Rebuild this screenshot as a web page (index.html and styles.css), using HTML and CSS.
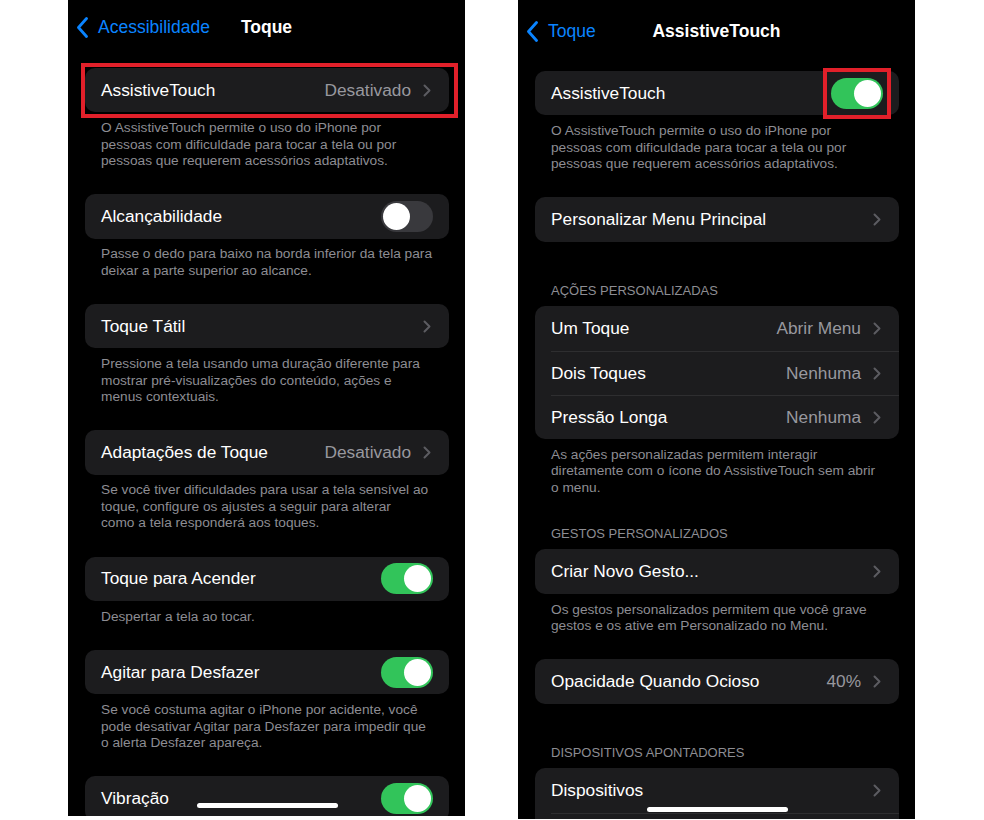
FILE: index.html
```html
<!DOCTYPE html>
<html lang="pt-BR">
<head>
  <meta charset="UTF-8" />
  <meta name="viewport" content="width=device-width, initial-scale=1.0" />
  <title>Toque - AssistiveTouch</title>
  <link rel="stylesheet" href="styles.css">
</head>
<body>
  <div class="screens">

    <!-- Ajustes > Acessibilidade > Toque -->
    <section class="phone phone-left">
      <header class="nav">
        <a class="back">
          <svg class="back-icon" viewBox="0 0 11 21"><path d="M9.5 1.5 L1.5 10.5 L9.5 19.5" /></svg>
          <span>Acessibilidade</span>
        </a>
        <h1 class="title">Toque</h1>
        <span></span>
      </header>

      <div class="list">
        <div class="section">
          <div class="card">
            <div class="row">
              <span class="label">AssistiveTouch</span>
              <span class="value">Desativado</span>
              <svg class="chev" viewBox="0 0 8 13"><path d="M1.5 1.5 L6.5 6.5 L1.5 11.5" /></svg>
            </div>
          </div>
          <p class="foot">O AssistiveTouch permite o uso do iPhone por<br>pessoas com dificuldade para tocar a tela ou por<br>pessoas que requerem acessórios adaptativos.</p>
        </div>

        <div class="section">
          <div class="card">
            <div class="row">
              <span class="label">Alcançabilidade</span>
              <span class="switch"></span>
            </div>
          </div>
          <p class="foot">Passe o dedo para baixo na borda inferior da tela para<br>deixar a parte superior ao alcance.</p>
        </div>

        <div class="section">
          <div class="card">
            <div class="row">
              <span class="label">Toque Tátil</span>
              <svg class="chev" viewBox="0 0 8 13"><path d="M1.5 1.5 L6.5 6.5 L1.5 11.5" /></svg>
            </div>
          </div>
          <p class="foot">Pressione a tela usando uma duração diferente para<br>mostrar pré-visualizações do conteúdo, ações e<br>menus contextuais.</p>
        </div>

        <div class="section">
          <div class="card">
            <div class="row">
              <span class="label">Adaptações de Toque</span>
              <span class="value">Desativado</span>
              <svg class="chev" viewBox="0 0 8 13"><path d="M1.5 1.5 L6.5 6.5 L1.5 11.5" /></svg>
            </div>
          </div>
          <p class="foot">Se você tiver dificuldades para usar a tela sensível ao<br>toque, configure os ajustes a seguir para alterar<br>como a tela responderá aos toques.</p>
        </div>

        <div class="section">
          <div class="card">
            <div class="row">
              <span class="label">Toque para Acender</span>
              <span class="switch on"></span>
            </div>
          </div>
          <p class="foot">Despertar a tela ao tocar.</p>
        </div>

        <div class="section">
          <div class="card">
            <div class="row">
              <span class="label">Agitar para Desfazer</span>
              <span class="switch on"></span>
            </div>
          </div>
          <p class="foot">Se você costuma agitar o iPhone por acidente, você<br>pode desativar Agitar para Desfazer para impedir que<br>o alerta Desfazer apareça.</p>
        </div>

        <div class="section">
          <div class="card">
            <div class="row">
              <span class="label">Vibração</span>
              <span class="switch on"></span>
            </div>
          </div>
        </div>
      </div>

      <div class="mark mark-left"></div>
      <div class="home"></div>
    </section>

    <!-- Toque > AssistiveTouch -->
    <section class="phone phone-right">
      <header class="nav">
        <a class="back">
          <svg class="back-icon" viewBox="0 0 11 21"><path d="M9.5 1.5 L1.5 10.5 L9.5 19.5" /></svg>
          <span>Toque</span>
        </a>
        <h1 class="title">AssistiveTouch</h1>
        <span></span>
      </header>

      <div class="list">
        <div class="section">
          <div class="card">
            <div class="row">
              <span class="label">AssistiveTouch</span>
              <span class="switch on"></span>
            </div>
          </div>
          <p class="foot">O AssistiveTouch permite o uso do iPhone por<br>pessoas com dificuldade para tocar a tela ou por<br>pessoas que requerem acessórios adaptativos.</p>
        </div>

        <div class="section bare">
          <div class="card">
            <div class="row">
              <span class="label">Personalizar Menu Principal</span>
              <svg class="chev" viewBox="0 0 8 13"><path d="M1.5 1.5 L6.5 6.5 L1.5 11.5" /></svg>
            </div>
          </div>
        </div>

        <div class="section">
          <h2 class="head">Ações personalizadas</h2>
          <div class="card">
            <div class="row">
              <span class="label">Um Toque</span>
              <span class="value">Abrir Menu</span>
              <svg class="chev" viewBox="0 0 8 13"><path d="M1.5 1.5 L6.5 6.5 L1.5 11.5" /></svg>
            </div>
            <div class="row">
              <span class="label">Dois Toques</span>
              <span class="value">Nenhuma</span>
              <svg class="chev" viewBox="0 0 8 13"><path d="M1.5 1.5 L6.5 6.5 L1.5 11.5" /></svg>
            </div>
            <div class="row">
              <span class="label">Pressão Longa</span>
              <span class="value">Nenhuma</span>
              <svg class="chev" viewBox="0 0 8 13"><path d="M1.5 1.5 L6.5 6.5 L1.5 11.5" /></svg>
            </div>
          </div>
          <p class="foot">As ações personalizadas permitem interagir<br>diretamente com o ícone do AssistiveTouch sem abrir<br>o menu.</p>
        </div>

        <div class="section">
          <h2 class="head">Gestos personalizados</h2>
          <div class="card">
            <div class="row">
              <span class="label">Criar Novo Gesto...</span>
              <svg class="chev" viewBox="0 0 8 13"><path d="M1.5 1.5 L6.5 6.5 L1.5 11.5" /></svg>
            </div>
          </div>
          <p class="foot">Os gestos personalizados permitem que você grave<br>gestos e os ative em Personalizado no Menu.</p>
        </div>

        <div class="section bare">
          <div class="card">
            <div class="row">
              <span class="label">Opacidade Quando Ocioso</span>
              <span class="value">40%</span>
              <svg class="chev" viewBox="0 0 8 13"><path d="M1.5 1.5 L6.5 6.5 L1.5 11.5" /></svg>
            </div>
          </div>
        </div>

        <div class="section">
          <h2 class="head">Dispositivos apontadores</h2>
          <div class="card">
            <div class="row">
              <span class="label">Dispositivos</span>
              <svg class="chev" viewBox="0 0 8 13"><path d="M1.5 1.5 L6.5 6.5 L1.5 11.5" /></svg>
            </div>
            <div class="row"></div>
          </div>
        </div>
      </div>

      <div class="mark mark-right"></div>
      <div class="home"></div>
    </section>

  </div>
</body>
</html>
```

FILE: styles.css
```css
body {
  margin: 0;
  background-color: #fff;
  font-family: "Liberation Sans", Arial, sans-serif;
  color: #fff;
}
.screens {
  display: flex;
  gap: 53px;
  padding-left: 68px;
  height: 820px;
}
.phone {
  position: relative;
  width: 397px;
  height: 816px;
  overflow: hidden;
  background-color: #000;
}
.phone-right {
  height: 819px;
}

/* navigation bar */
.nav {
  display: grid;
  grid-template-columns: 1fr auto 1fr;
  align-items: center;
  height: 54px;
  padding: 0 9px;
}
.phone-right .nav {
  height: 62px;
}
.back {
  display: flex;
  align-items: center;
  gap: 10px;
  color: #0a84ff;
  font-size: 17.5px;
}
.back-icon {
  width: 11px;
  height: 21px;
  fill: none;
  stroke: #0a84ff;
  stroke-width: 2.8;
  stroke-linecap: round;
  stroke-linejoin: round;
}
.title {
  margin: 0;
  font-size: 17.5px;
  font-weight: 700;
}

/* grouped list */
.list {
  padding: 14px 16px 0 17px;
}
.phone-right .list {
  padding-top: 9px;
}
.section + .section {
  margin-top: 24.75px;
}
.section.bare {
  padding-bottom: 11.75px;
}
.card {
  background-color: #1c1c1e;
  border-radius: 10px;
  overflow: hidden;
}
.row {
  display: flex;
  align-items: center;
  box-sizing: border-box;
  height: 44.3px;
  margin-left: 16px;
  padding-right: 16px;
  font-size: 17.3px;
}
.row + .row {
  border-top: 1px solid #2e2e30;
}
.label {
  flex: 1;
  white-space: nowrap;
}
.value {
  margin-right: 12px;
  color: #98989e;
}
.chev {
  width: 8px;
  height: 13px;
  margin-right: 2px;
  fill: none;
  stroke: #5c5c61;
  stroke-width: 2;
  stroke-linecap: round;
  stroke-linejoin: round;
}
.foot {
  margin: 0;
  padding: 7.75px 16px 0;
  font-size: 13.7px;
  line-height: 16.5px;
  color: #8d8d93;
  white-space: nowrap;
}
.head {
  margin: 0;
  padding: 4.75px 16px 7px;
  font-size: 13px;
  line-height: 16.5px;
  font-weight: 400;
  text-transform: uppercase;
  color: #8d8d93;
}

/* switches */
.switch {
  position: relative;
  width: 52px;
  height: 31px;
  border-radius: 16px;
  background-color: #39393d;
}
.switch::after {
  content: "";
  position: absolute;
  top: 2px;
  left: 2px;
  width: 27px;
  height: 27px;
  border-radius: 50%;
  background-color: #fff;
}
.switch.on {
  background-color: #32c45a;
}
.switch.on::after {
  left: 23px;
}

/* red highlight boxes */
.mark {
  position: absolute;
  border: 4px solid #e2202a;
  box-sizing: border-box;
}
.mark-left {
  left: 13px;
  top: 63px;
  width: 377px;
  height: 55px;
}
.mark-right {
  left: 305px;
  top: 68px;
  width: 68px;
  height: 51px;
}

/* home indicator */
.home {
  position: absolute;
  left: 129px;
  bottom: 8px;
  width: 141px;
  height: 5px;
  border-radius: 3px;
  background-color: #fff;
}
.phone-right .home {
  bottom: 7px;
}
```
